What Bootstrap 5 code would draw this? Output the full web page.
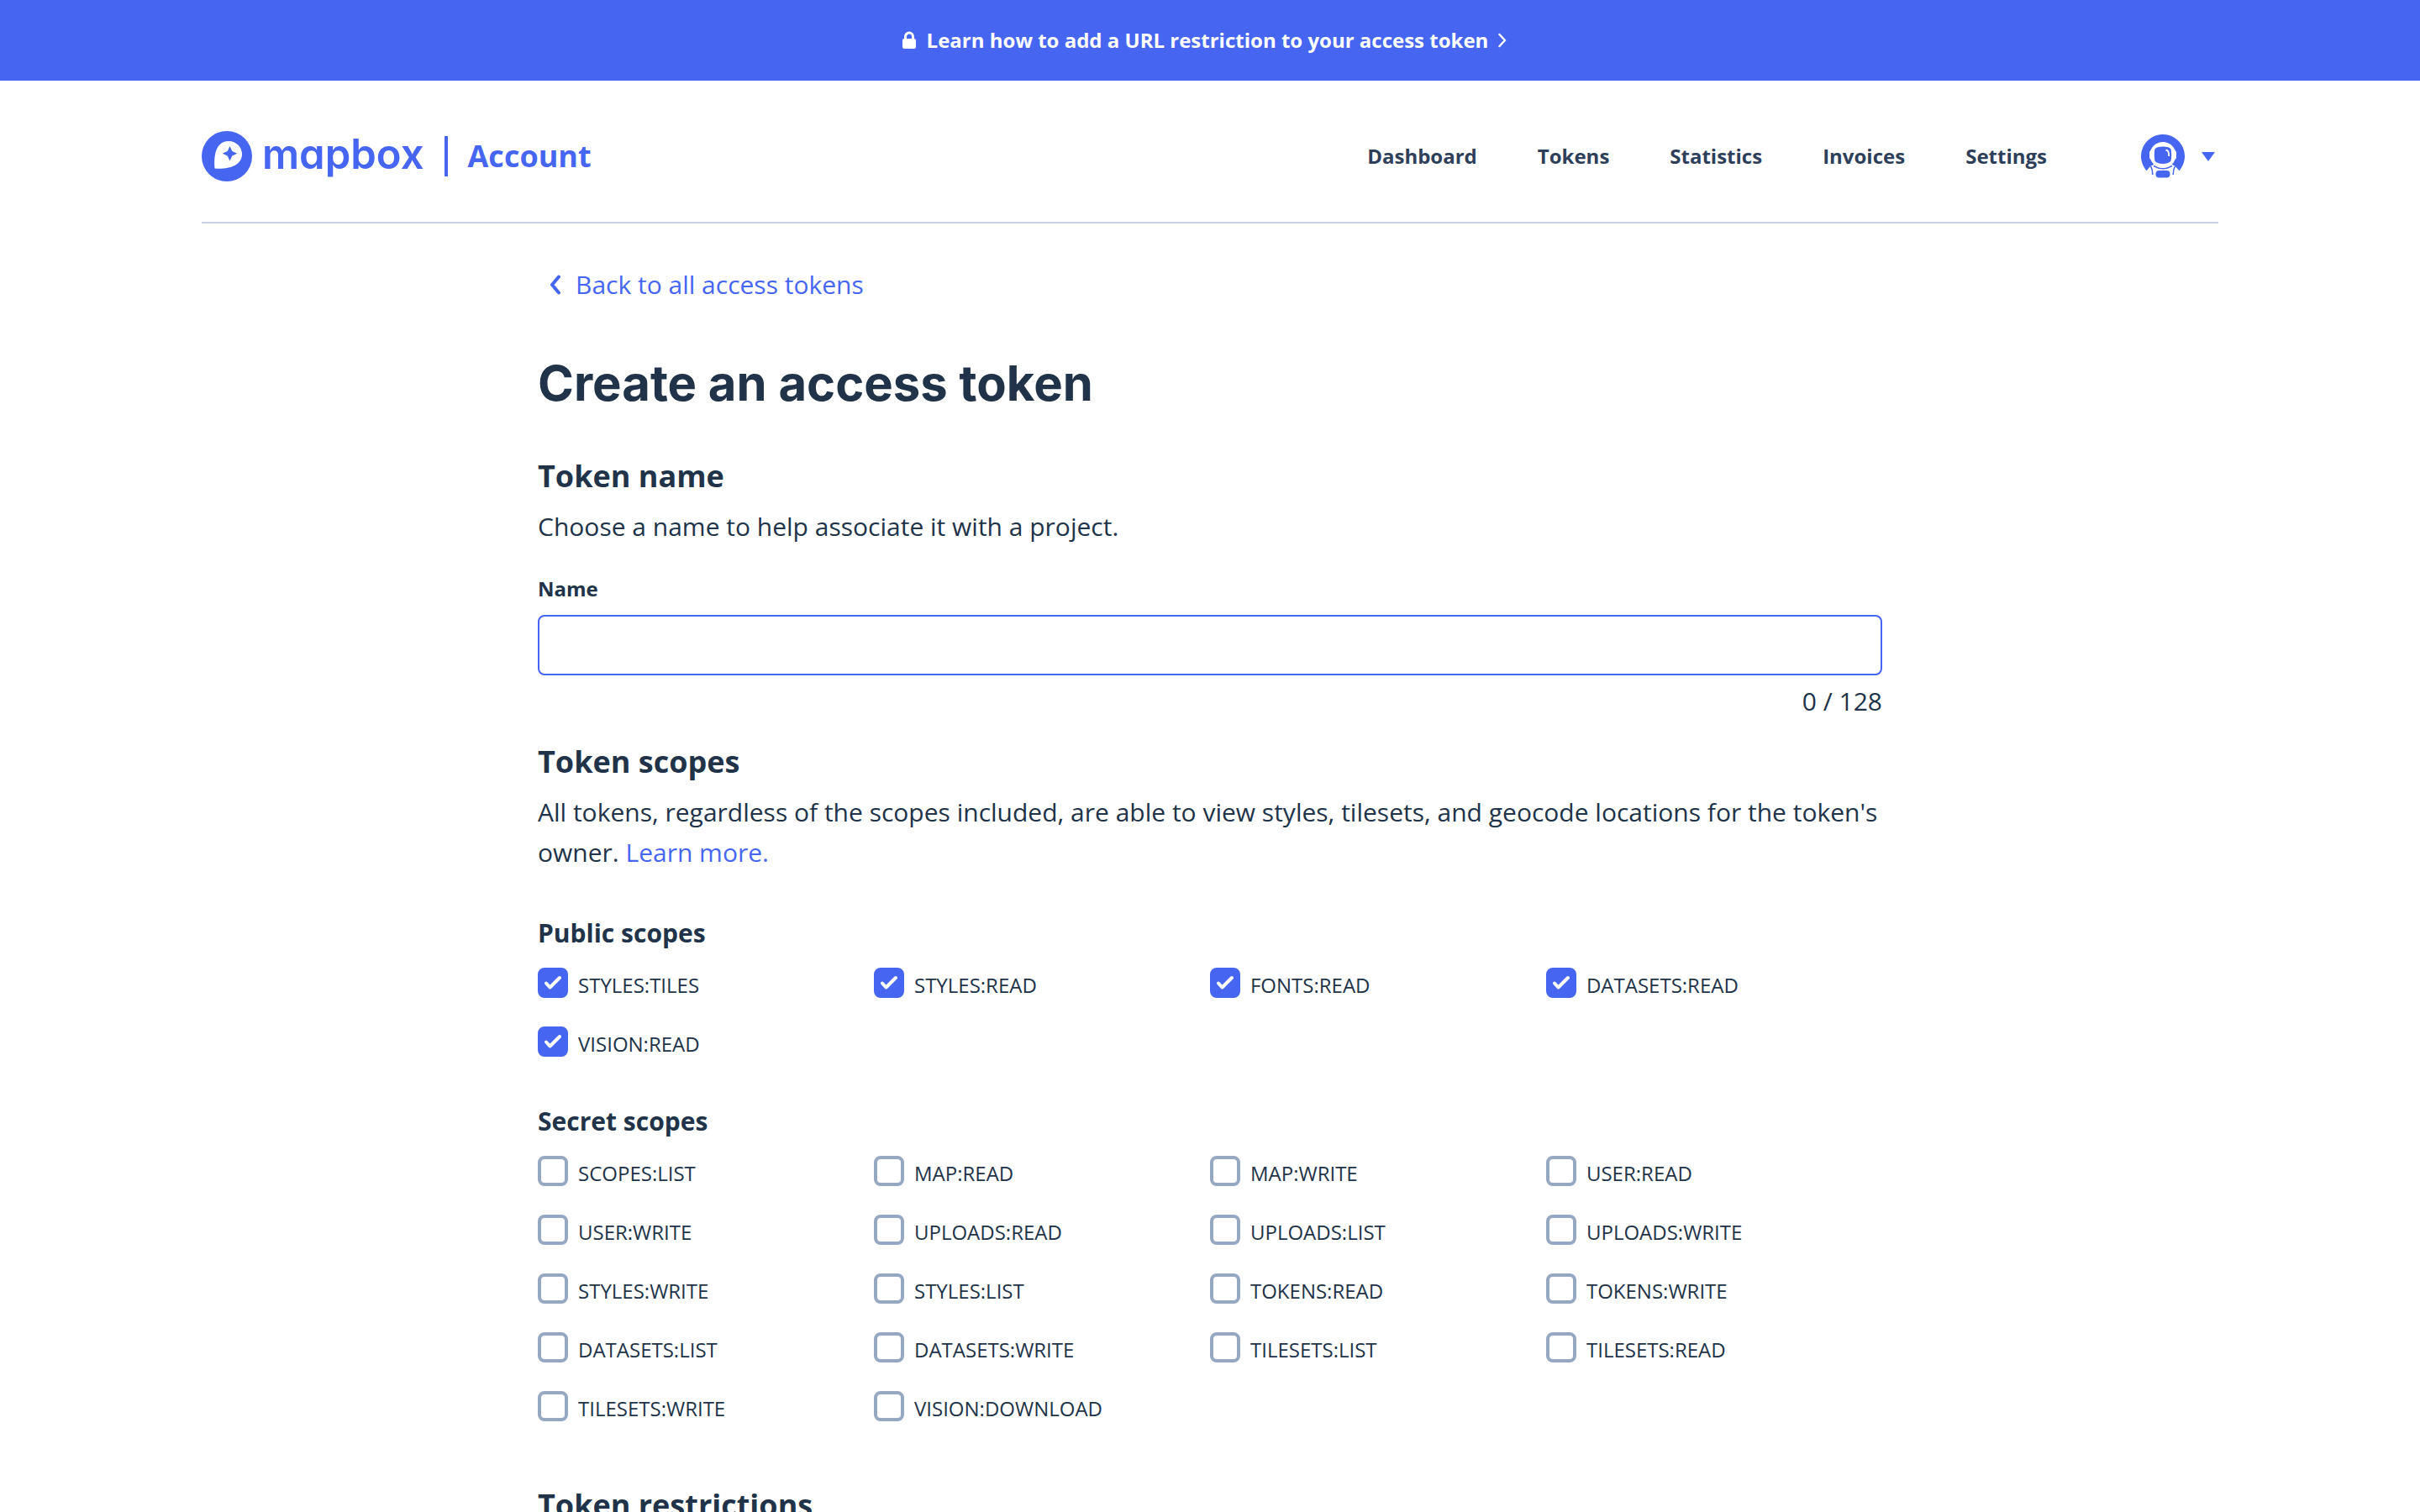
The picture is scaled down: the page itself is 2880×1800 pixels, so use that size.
<!DOCTYPE html>
<html lang="en">
<head>
<meta charset="utf-8">
<meta name="viewport" content="width=device-width, initial-scale=1">
<title>Create an access token | Mapbox Account</title>
<link href="https://cdn.jsdelivr.net/npm/bootstrap@5.3.0/dist/css/bootstrap.min.css" rel="stylesheet">
<style>
  :root { --brand: #4666f2; --ink: #213349; --nav-ink: #2e4059; --box: #96a7c1; --rule: #c6d2e1; }
  body { font-family: "Open Sans", sans-serif; font-size: 30px; line-height: 48px; color: var(--ink); background: #fff; }
  a { color: var(--brand); text-decoration: none; }
  svg { display: block; flex: none; }
  .promo { background: var(--brand); min-height: 96px; padding-right: 14px; }
  .promo a { color: #fff; font-size: 24px; line-height: 36px; gap: 12px; }
  .shell { width: 83.3333%; }
  .site-head { padding: 60px 0 48px; border-bottom: 2px solid var(--rule); }
  .wordmark { font-family: Inter, sans-serif; font-feature-settings: "cv11"; font-size: 49px; font-weight: 600; line-height: 56px; margin-left: 12px; padding-bottom: 4px; }
  .brand-bar { width: 4px; height: 48px; background: var(--brand); margin: 0 24px; }
  .product { font-size: 36px; line-height: 48px; }
  .site-nav { gap: 72px; font-size: 24px; line-height: 36px; }
  .site-nav a { color: var(--nav-ink); }
  .account-btn { gap: 20px; margin-left: 112px; padding-right: 4px; }
  .back-link { gap: 16px; margin-top: 49px; padding-left: 13px; }
  h1 { font-family: Inter, sans-serif; font-size: 58px; line-height: 72px; font-weight: 700; margin: 57px 0 51px; }
  h2 { font-size: 36px; line-height: 48px; font-weight: 700; margin: 0 0 12px; }
  h3 { font-size: 30px; line-height: 48px; font-weight: 700; margin: 47px 0 17px; }
  .intro { margin-bottom: 48px; }
  .name-label { font-size: 24px; line-height: 36px; font-weight: 700; margin: 32px 0 13px; }
  .name-field, .name-field:focus { height: 72px; border: 2px solid var(--brand); border-radius: 8px; font-size: 30px; padding: 12px 18px; box-shadow: none; }
  .counter { margin: 7px 0 24px; }
  .scopes { --bs-gutter-x: 0; row-gap: 28px; }
  .scope { font-size: 24px; line-height: 42px; gap: 12px; }
  .scope .form-check-input { width: 36px; height: 36px; margin: 0; border: 4px solid var(--box); border-radius: 8px; flex: none; }
  .scope .form-check-input:checked { background-color: var(--brand); border-color: var(--brand); background-size: 28px 28px;
    background-image: url("data:image/svg+xml,%3Csvg xmlns='http://www.w3.org/2000/svg' viewBox='0 0 28 28'%3E%3Cpath fill='none' stroke='%23fff' stroke-width='4' stroke-linecap='round' stroke-linejoin='round' d='M6 14.500l4.500 5L22 8'/%3E%3C/svg%3E"); }
  .restrictions { margin-top: 70px; }
</style>
</head>
<body>
<div class="vh-100 overflow-hidden">
  <div class="promo d-flex align-items-center justify-content-center">
    <a href="#" class="d-flex align-items-center fw-bold">
      <svg width="18" height="22" viewBox="0 0 18 22" aria-hidden="true"><path d="M4.500 10V6.500a4.500 4.500 0 0 1 9 0V10" fill="none" stroke="#fff" stroke-width="3"/><rect x="1" y="9" width="16" height="12" rx="2" fill="#fff"/></svg>
      <span>Learn how to add a URL restriction to your access token</span>
      <svg width="10" height="18" viewBox="0 0 10 18" aria-hidden="true"><path d="M1.500 2l6.500 7-6.500 7" fill="none" stroke="#fff" stroke-width="2.500" stroke-linecap="round" stroke-linejoin="round"/></svg>
    </a>
  </div>

  <div class="shell mx-auto">
    <header class="site-head d-flex align-items-center justify-content-between">
      <a href="#" class="d-flex align-items-center fw-bold">
        <svg width="60" height="60" viewBox="0 0 60 60" aria-hidden="true"><circle cx="30" cy="30" r="30" fill="#4666f2"/><path d="M15.500 44.500C14 29 17 12 32 12c9 0 16 7 16 15.500C48 42 30 46 15.500 44.500z" fill="#fff"/><path d="M33.500 18l2.800 6 6 2.700-6 2.800-2.800 6-2.800-6-6-2.800 6-2.700z" fill="#4666f2"/></svg>
        <span class="wordmark">mapbox</span>
        <span class="brand-bar"></span>
        <span class="product">Account</span>
      </a>
      <div class="d-flex align-items-center">
        <nav class="site-nav d-flex fw-bold" aria-label="Account">
          <a href="#">Dashboard</a>
          <a href="#">Tokens</a>
          <a href="#">Statistics</a>
          <a href="#">Invoices</a>
          <a href="#">Settings</a>
        </nav>
        <button type="button" class="account-btn btn border-0 p-0 pe-1 d-flex align-items-center" aria-label="Account menu">
          <svg width="52" height="52" viewBox="0 0 52 52" aria-hidden="true">
            <path d="M26 0a26 26 0 0 1 19.500 43.200L40 37H12l-5.500 6.200A26 26 0 0 1 26 0z" fill="#4666f2"/>
            <path d="M14 36h24l5 12H9z" fill="#fff"/>
            <path d="M11.500 37.500c1.500 3 2.300 6 2.300 10.500M40.500 37.500c-1.500 3-2.300 6-2.300 10.500" fill="none" stroke="#4666f2" stroke-width="1.600"/>
            <path d="M15 37.500c7 4 15 4 22 0" fill="none" stroke="#4666f2" stroke-width="1.800"/>
            <rect x="10" y="19" width="32" height="11" rx="3" fill="#fff"/>
            <circle cx="26" cy="24.500" r="15.500" fill="#fff"/>
            <path d="M26 14.500c5 0 8 1 9.200 2.500 1.300 2 1.300 13 0 15-1.200 1.500-4.200 3-9.200 3s-8-1.500-9.200-3c-1.300-2-1.300-13 0-15 1.200-1.500 4.200-2.500 9.200-2.500z" fill="#4666f2"/>
            <path d="M29.500 18.500q4 .5 3.700 7.500" fill="none" stroke="#fff" stroke-width="1.800"/>
            <rect x="17.500" y="43" width="17" height="8.500" rx="4" fill="#4666f2"/>
          </svg>
          <svg width="16" height="11" viewBox="0 0 16 11" aria-hidden="true"><path d="M0 0h16L8 11z" fill="#4666f2"/></svg>
        </button>
      </div>
    </header>

    <div class="row g-0 justify-content-center">
      <main class="col-8">
        <div class="d-flex">
          <a href="#" class="back-link d-flex align-items-center">
            <svg width="16" height="24" viewBox="0 0 16 24" aria-hidden="true"><path d="M12 2.500L4 12l8 9.500" fill="none" stroke="#4666f2" stroke-width="4" stroke-linecap="round" stroke-linejoin="round"/></svg>
            <span>Back to all access tokens</span>
          </a>
        </div>
        <h1>Create an access token</h1>

        <h2>Token name</h2>
        <p class="mb-0">Choose a name to help associate it with a project.</p>
        <label class="name-label d-block" for="token-name">Name</label>
        <input class="name-field form-control" id="token-name" type="text" maxlength="128">
        <div class="counter text-end">0 / 128</div>

        <h2>Token scopes</h2>
        <p class="intro">All tokens, regardless of the scopes included, are able to view styles, tilesets, and geocode locations for the token's owner. <a href="#">Learn more.</a></p>

        <h3>Public scopes</h3>
        <div class="scopes row row-cols-4">
          <div class="d-flex"><label class="scope d-flex"><input class="form-check-input" type="checkbox" checked><span>STYLES:TILES</span></label></div>
          <div class="d-flex"><label class="scope d-flex"><input class="form-check-input" type="checkbox" checked><span>STYLES:READ</span></label></div>
          <div class="d-flex"><label class="scope d-flex"><input class="form-check-input" type="checkbox" checked><span>FONTS:READ</span></label></div>
          <div class="d-flex"><label class="scope d-flex"><input class="form-check-input" type="checkbox" checked><span>DATASETS:READ</span></label></div>
          <div class="d-flex"><label class="scope d-flex"><input class="form-check-input" type="checkbox" checked><span>VISION:READ</span></label></div>
        </div>

        <h3>Secret scopes</h3>
        <div class="scopes row row-cols-4">
          <div class="d-flex"><label class="scope d-flex"><input class="form-check-input" type="checkbox"><span>SCOPES:LIST</span></label></div>
          <div class="d-flex"><label class="scope d-flex"><input class="form-check-input" type="checkbox"><span>MAP:READ</span></label></div>
          <div class="d-flex"><label class="scope d-flex"><input class="form-check-input" type="checkbox"><span>MAP:WRITE</span></label></div>
          <div class="d-flex"><label class="scope d-flex"><input class="form-check-input" type="checkbox"><span>USER:READ</span></label></div>
          <div class="d-flex"><label class="scope d-flex"><input class="form-check-input" type="checkbox"><span>USER:WRITE</span></label></div>
          <div class="d-flex"><label class="scope d-flex"><input class="form-check-input" type="checkbox"><span>UPLOADS:READ</span></label></div>
          <div class="d-flex"><label class="scope d-flex"><input class="form-check-input" type="checkbox"><span>UPLOADS:LIST</span></label></div>
          <div class="d-flex"><label class="scope d-flex"><input class="form-check-input" type="checkbox"><span>UPLOADS:WRITE</span></label></div>
          <div class="d-flex"><label class="scope d-flex"><input class="form-check-input" type="checkbox"><span>STYLES:WRITE</span></label></div>
          <div class="d-flex"><label class="scope d-flex"><input class="form-check-input" type="checkbox"><span>STYLES:LIST</span></label></div>
          <div class="d-flex"><label class="scope d-flex"><input class="form-check-input" type="checkbox"><span>TOKENS:READ</span></label></div>
          <div class="d-flex"><label class="scope d-flex"><input class="form-check-input" type="checkbox"><span>TOKENS:WRITE</span></label></div>
          <div class="d-flex"><label class="scope d-flex"><input class="form-check-input" type="checkbox"><span>DATASETS:LIST</span></label></div>
          <div class="d-flex"><label class="scope d-flex"><input class="form-check-input" type="checkbox"><span>DATASETS:WRITE</span></label></div>
          <div class="d-flex"><label class="scope d-flex"><input class="form-check-input" type="checkbox"><span>TILESETS:LIST</span></label></div>
          <div class="d-flex"><label class="scope d-flex"><input class="form-check-input" type="checkbox"><span>TILESETS:READ</span></label></div>
          <div class="d-flex"><label class="scope d-flex"><input class="form-check-input" type="checkbox"><span>TILESETS:WRITE</span></label></div>
          <div class="d-flex"><label class="scope d-flex"><input class="form-check-input" type="checkbox"><span>VISION:DOWNLOAD</span></label></div>
        </div>

        <h2 class="restrictions">Token restrictions</h2>
      </main>
    </div>
  </div>
</div>
<script src="https://cdn.jsdelivr.net/npm/bootstrap@5.3.0/dist/js/bootstrap.bundle.min.js"></script>
</body>
</html>
